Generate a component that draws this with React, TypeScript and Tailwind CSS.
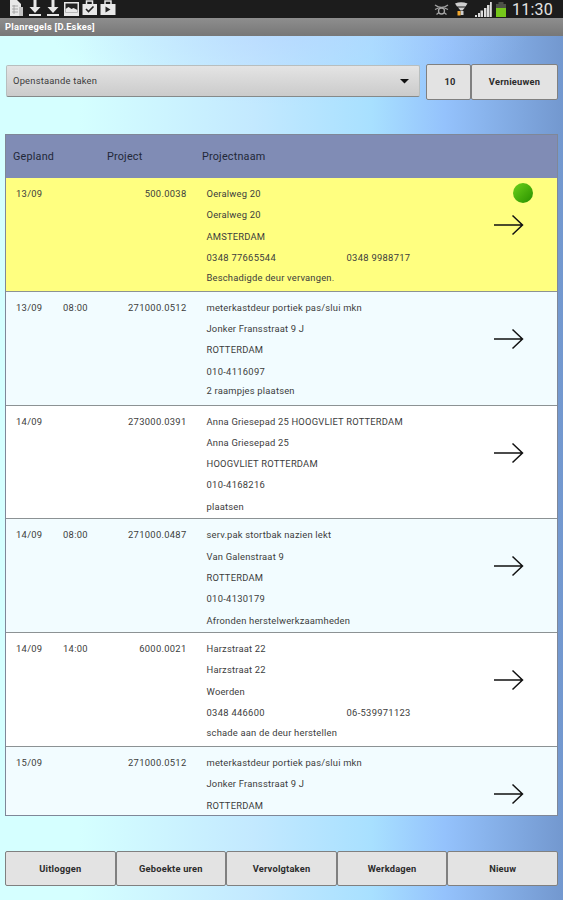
import React from "react";

type Task = {
  date: string;
  time?: string;
  project: string;
  lines: string[];
  phone?: string;
  phone2?: string;
  note?: string;
  low?: boolean;
  active?: boolean;
  bg: string;
};

const tasks: Task[] = [
  { date: "13/09", project: "500.0038", lines: ["Oeralweg 20", "Oeralweg 20", "AMSTERDAM"], phone: "0348 77665544", phone2: "0348 9988717", note: "Beschadigde deur vervangen.", active: true, bg: "bg-[#ffff80]" },
  { date: "13/09", time: "08:00", project: "271000.0512", lines: ["meterkastdeur portiek pas/slui mkn", "Jonker Fransstraat 9 J", "ROTTERDAM"], phone: "010-4116097", note: "2 raampjes plaatsen", bg: "bg-[#f2fcff]" },
  { date: "14/09", project: "273000.0391", lines: ["Anna Griesepad 25 HOOGVLIET ROTTERDAM", "Anna Griesepad 25", "HOOGVLIET ROTTERDAM"], phone: "010-4168216", note: "plaatsen", low: true, bg: "bg-white" },
  { date: "14/09", time: "08:00", project: "271000.0487", lines: ["serv.pak stortbak nazien lekt", "Van Galenstraat 9", "ROTTERDAM"], phone: "010-4130179", note: "Afronden herstelwerkzaamheden", low: true, bg: "bg-[#f2fcff]" },
  { date: "14/09", time: "14:00", project: "6000.0021", lines: ["Harzstraat 22", "Harzstraat 22", "Woerden"], phone: "0348 446600", phone2: "06-539971123", note: "schade aan de deur herstellen", bg: "bg-white" },
  { date: "15/09", project: "271000.0512", lines: ["meterkastdeur portiek pas/slui mkn", "Jonker Fransstraat 9 J", "ROTTERDAM"], bg: "bg-[#f2fcff]" },
];

function StatusBar() {
  return (
    <div className="flex h-[18px] shrink-0 items-start justify-between bg-[#1c1c1c] text-[#e4e4e4]">
      <svg width="130" height="18" viewBox="0 0 130 18" fill="#e8e8e8">
        <path d="M10 0h7l4 4v12H10z" />
        <path d="M12 6h6M12 9h6M12 12h6M14 5v9" stroke="#999" strokeWidth="0.8" />
        <path d="M19 7h4v9h-4z" fill="#c4c4c4" />
        <path d="M33.500 0h3v7h4L35 13l-5.500-6h4zM29 14h12v2H29z" />
        <path d="M51.500 0h3v7h4L53 13l-5.500-6h4zM47 14h12v2H47z" />
        <path d="M64 2h15v14H64z" />
        <path d="M65.500 3.500h12v9h-12z" fill="#242424" />
        <path d="M65.500 12.500V9l3-2 3 2 2-1 4 2v2.500z" />
        <path d="M82.500 4h14.500v11H82.500zM100.500 4h15v11h-15z" />
        <path d="M86.500 4V1h6v3M105 4V1h6v3" fill="none" stroke="#e8e8e8" strokeWidth="1.500" />
        <path d="m86 9 2.500 2.500 5-5" fill="none" stroke="#222" strokeWidth="1.600" />
        <path d="m105.500 6.500 5 3-5 3z" fill="#222" />
      </svg>
      <div className="flex items-start">
        <svg width="78" height="18" viewBox="0 0 78 18">
          <g fill="none" stroke="#a4a4a4" strokeWidth="1.300">
            <path d="M1 5q6.500 5 13 0M1 9.500l3.500-1.500M14 9.500l-3.500-1.500M2.500 14.500l2.500-2M12.500 14.500l-2.500-2" />
            <circle cx="7.500" cy="11" r="3" />
          </g>
          <path d="M21 3.500q6-2.500 12.500 0l-2 3h-8.500zM24 7.500h7l-2.500 3h-2zM26.500 11h3v4h-3z" fill="#d0d0d0" />
          <path d="M23.500 11h3v4.500h-3z" fill="#f3a72c" />
          <path d="M41 17v-2h2v2zM44 17v-4h2v4zM46.500 17V10.500h2.500V17zM50 17V8h2.500v9zM53 17V5h2.500v12zM56 17V2h1.800v15z" fill="#dcdcdc" />
          <path d="M64.500 2h5v2H72v13H62V4h2.500z" fill="#4d5148" />
          <path d="M62 8h10v9H62z" fill="#76c81b" />
        </svg>
        <span className="mr-[10px] w-[41px] whitespace-nowrap pt-px text-[16px] leading-[18px]">11:30</span>
      </div>
    </div>
  );
}

function Arrow() {
  return (
    <svg width="30" height="22" viewBox="0 0 30 22" fill="none" stroke="#111" strokeWidth="1.500">
      <path d="M0 11h28.500M18.500 1.500 28.500 11l-10 9.500" />
    </svg>
  );
}

function Row({ task }: { task: Task }) {
  return (
    <div className={`flex h-[113.8px] shrink-0 border-b border-[#8c9294] pt-[5px] leading-[21.3px] ${task.bg}`}>
      <span className="w-[47px] shrink-0 pl-[10px] tracking-[0.3px]">{task.date}</span>
      <span className="w-[53px] shrink-0 pl-[10px] tracking-[0.3px]">{task.time}</span>
      <span className="w-[80.500px] shrink-0 text-right tracking-[0.3px]">{task.project}</span>
      <div className="w-[287.500px] shrink-0 pl-[20px]">
        {task.lines.map((line, i) => (
          <div key={i}>{line}</div>
        ))}
        <div className="flex tracking-[0.300px]">
          <span className="w-[140px]">{task.phone}</span>
          <span>{task.phone2}</span>
        </div>
        <div className={task.low ? "" : "-mt-[1.500px]"}>{task.note}</div>
      </div>
      <div className="flex w-[60px] flex-col pl-[20px]">
        <div className="flex h-[31px] pl-[18.500px]">
          {task.active && <span className="h-5 w-5 rounded-full bg-linear-to-br from-[#6bd21a] to-[#259000]" />}
        </div>
        <Arrow />
      </div>
    </div>
  );
}

const buttonClass =
  "flex items-center justify-center rounded-[2px] border border-[#808080] bg-[#e3e3e3] text-[9.300px] font-bold text-[#2c2c2c]";

export default function App() {
  return (
    <div className="flex h-[900px] w-[563px] flex-col overflow-hidden bg-[radial-gradient(ellipse_240px_75px_at_290px_30px,rgba(180,208,255,0.55),transparent),linear-gradient(90deg,#d5ffff_0%,#d5ffff_14%,#c3e9ff_45%,#a8e0ff_66%,#94c2fc_79%,#7398cf_100%)] font-[Roboto,sans-serif] text-[9.400px] tracking-[0.2px] text-[#3c3c3c]">
      <StatusBar />
      <div className="h-[18px] shrink-0 bg-linear-to-b from-[#8e8e8e] to-[#777] pl-[5px] text-[9.300px] leading-[18px] font-bold tracking-[0.250px] text-white">
        Planregels [D.Eskes]
      </div>
      <div className="mt-[28px] flex h-[36px] shrink-0 items-start pl-[6px]">
        <div className="mt-px flex h-[32px] w-[414px] items-center justify-between rounded-[2px] border border-[#b8bebe] border-b-[#858989] bg-linear-to-b from-[#e4e4e4] to-[#cbcbcb] pr-[10px] pl-[6px]">
          <span>Openstaande taken</span>
          <svg width="9" height="6" viewBox="0 0 9 6">
            <path d="M0 1h9L4.500 5.500z" fill="#111" />
          </svg>
        </div>
        <div className={`${buttonClass} ml-[6px] h-[36px] w-[45px]`}>
          <span className="pl-[3px]">10</span>
        </div>
        <div className={`${buttonClass} h-[36px] w-[87px]`}>Vernieuwen</div>
      </div>
      <div className="mt-[34px] ml-[5px] flex h-[682px] w-[553px] shrink-0 flex-col overflow-hidden border border-[#7f8798]">
        <div className="flex h-[43px] shrink-0 items-center bg-[#808cb5] pt-px pl-[7px] text-[10.800px] text-[#222838]">
          <span className="w-[94px]">Gepland</span>
          <span className="w-[95px]">Project</span>
          <span>Projectnaam</span>
        </div>
        {tasks.map((task, i) => (
          <Row key={i} task={task} />
        ))}
      </div>
      <div className="mt-[35px] ml-[5px] flex h-[35px] w-[553px] shrink-0">
        {["Uitloggen", "Geboekte uren", "Vervolgtaken", "Werkdagen", "Nieuw"].map((label) => (
          <div key={label} className={`${buttonClass} flex-1`}>
            {label}
          </div>
        ))}
      </div>
    </div>
  );
}
